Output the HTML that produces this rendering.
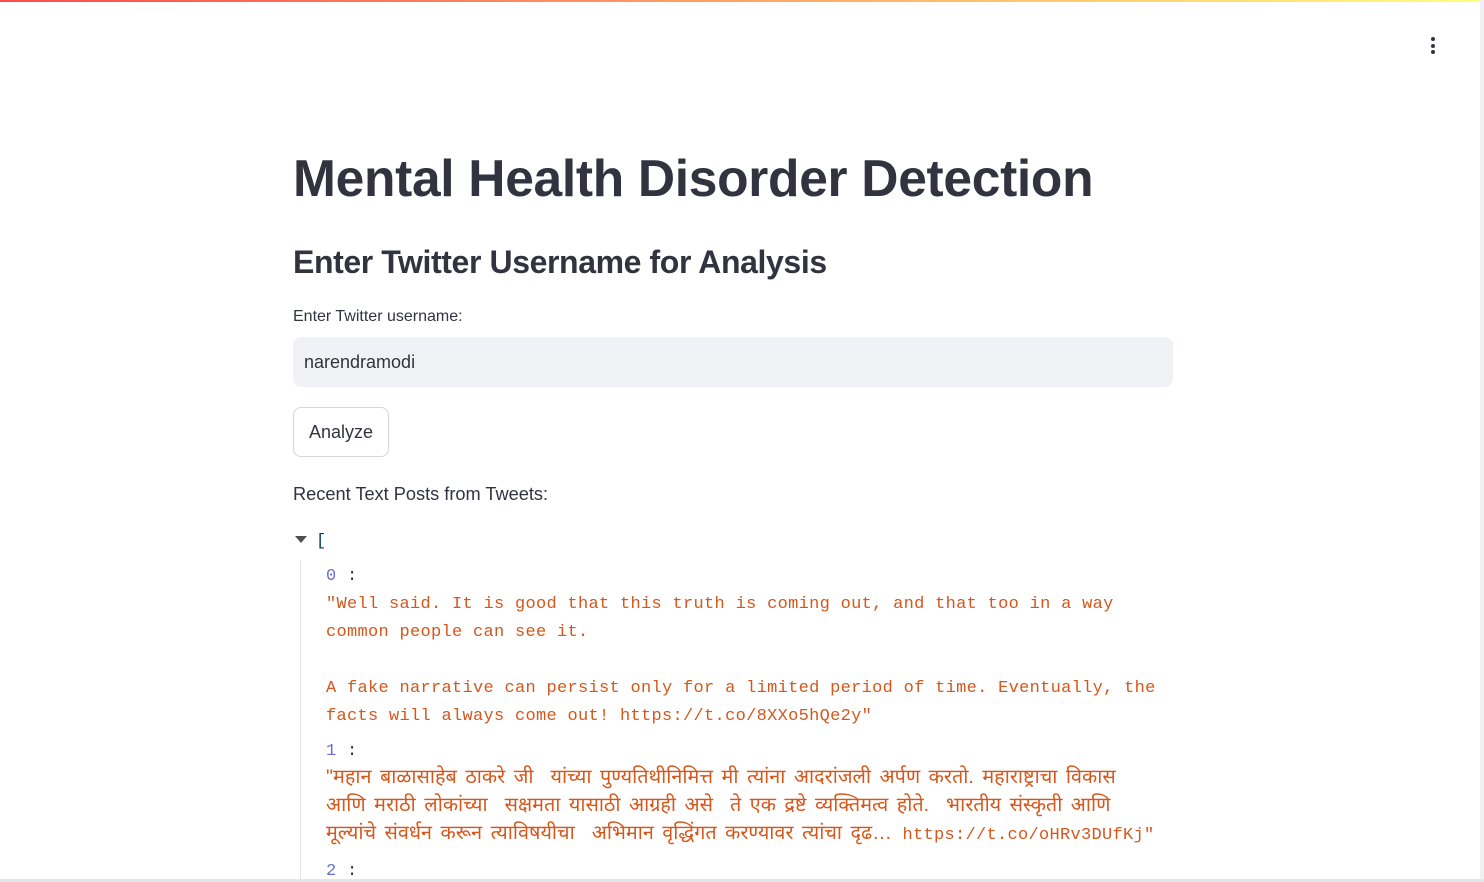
<!DOCTYPE html>
<html><head><meta charset="utf-8"><style>
html,body{margin:0;padding:0;width:1484px;height:882px;overflow:hidden;background:#fff;font-family:"Liberation Sans",sans-serif;color:#31333f;position:relative}
.topbar{position:absolute;left:0;top:0;width:1484px;height:2px;background:linear-gradient(90deg,#ff4b4b,#fffd80)}
.rs{position:absolute;right:0;top:0;width:4px;height:882px;background:#f0f0f2}
.bs{position:absolute;left:0;bottom:0;width:1484px;height:3px;background:#e6e6ea}
.dots{position:absolute;left:1431px;top:37px}
.dots i{display:block;width:4px;height:4px;border-radius:2px;background:#31333f;margin-bottom:2.5px}
h1{position:absolute;left:293px;top:146px;margin:0;font-size:51.5px;font-weight:bold;letter-spacing:-0.3px;line-height:64px;white-space:nowrap}
h2{position:absolute;left:293px;top:240px;margin:0;font-size:32px;font-weight:bold;letter-spacing:-0.4px;line-height:44px;white-space:nowrap}
.lbl{position:absolute;left:293px;top:307px;font-size:16px;line-height:20px}
.inp{position:absolute;left:293px;top:337px;width:880px;height:50px;background:#f0f2f6;border-radius:8px;font-size:18px;line-height:50px;box-sizing:border-box;padding-left:11px}
.btn{position:absolute;left:293px;top:407px;width:96px;height:50px;border:1px solid #d6d6d9;border-radius:8px;box-sizing:border-box;font-size:18px;line-height:48px;text-align:center}
.rec{position:absolute;left:293px;top:482px;font-size:18.2px;line-height:24px}
.tri{position:absolute;left:295px;top:536px;width:0;height:0;border-left:6px solid transparent;border-right:6px solid transparent;border-top:7px solid #505050}
.br{position:absolute;left:316px;top:532px;font-family:"Liberation Mono",monospace;font-size:17px;color:#0b3c5d}
.vl{position:absolute;left:300px;top:560px;width:1px;height:322px;background:#e6e6e6}
.j{position:absolute;left:326px;font-family:"Liberation Mono",monospace;font-size:17px;letter-spacing:0.3px;line-height:28px;color:#d5571b;white-space:pre}
.k{color:#6a6fd0}.c{color:#333}
.dv{font-family:"Liberation Sans","Noto Sans CJK JP",sans-serif;font-size:19.8px;letter-spacing:0;word-spacing:3px}
</style></head><body>
<div class="topbar"></div><div class="rs"></div><div class="bs"></div>
<div class="dots"><i></i><i></i><i></i></div>
<h1>Mental Health Disorder Detection</h1>
<h2>Enter Twitter Username for Analysis</h2>
<div class="lbl">Enter Twitter username:</div>
<div class="inp">narendramodi</div>
<div class="btn">Analyze</div>
<div class="rec">Recent Text Posts from Tweets:</div>
<div class="tri"></div><div class="br">[</div>
<div class="vl"></div>
<div class="j" style="top:563px"><span class="k">0</span><span class="c"> :</span></div>
<div class="j" style="top:591px">"Well said. It is good that this truth is coming out, and that too in a way
common people can see it.

A fake narrative can persist only for a limited period of time. Eventually, the
facts will always come out! https://t.co/8XXo5hQe2y"</div>
<div class="j" style="top:738px"><span class="k">1</span><span class="c"> :</span></div>
<div class="j" style="top:763px"><span class="dv">"महान बाळासाहेब ठाकरे जी  यांच्या पुण्यतिथीनिमित्त मी त्यांना आदरांजली अर्पण करतो. महाराष्ट्राचा विकास</span></div>
<div class="j" style="top:791px"><span class="dv">आणि मराठी लोकांच्या  सक्षमता यासाठी आग्रही असे  ते एक द्रष्टे व्यक्तिमत्व होते.  भारतीय संस्कृती आणि</span></div>
<div class="j" style="top:819px"><span class="dv">मूल्यांचे संवर्धन करून त्याविषयीचा  अभिमान वृद्धिंगत करण्यावर त्यांचा दृढ…</span> https://t.co/oHRv3DUfKj"</div>
<div class="j" style="top:858px"><span class="k">2</span><span class="c"> :</span></div>
</body></html>
